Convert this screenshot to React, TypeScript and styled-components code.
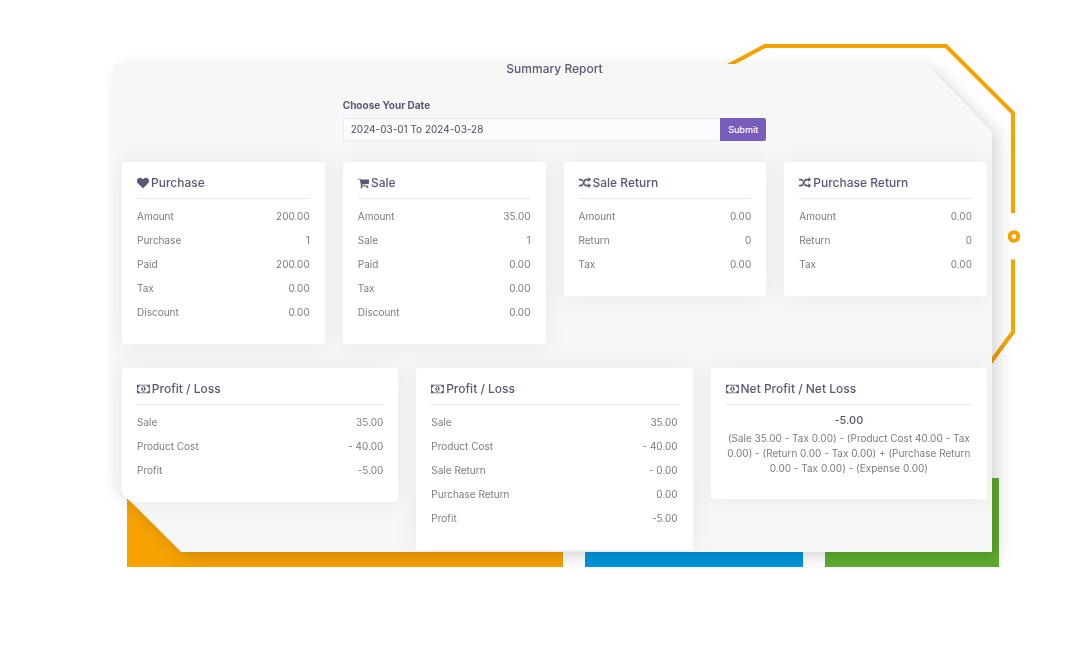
import React from 'react';
import styled, { createGlobalStyle } from 'styled-components';

const GlobalStyle = createGlobalStyle`
  *, *::before, *::after { box-sizing: border-box; }
  body {
    margin: 0;
    background: #fff;
    color: #7c7c7c;
    font-family: Inter, "Liberation Sans", sans-serif;
    font-size: 10px;
    line-height: 15px;
  }
`;

const Page = styled.main`
  padding: 64px 80px 64px 113px;
`;

const Stage = styled.div`
  position: relative;
`;

const Frame = styled.svg`
  position: absolute;
  top: -20px;
  right: -30px;
  width: 302px;
  height: 324px;
  fill: none;
  stroke: #f6a200;
  stroke-width: 4;
`;

const Blocks = styled.div`
  position: absolute;
  left: 14px;
  right: -7px;
  bottom: -15px;
  display: flex;
  align-items: flex-end;
  gap: 22px;
`;

const Block = styled.div<{ $color: string; $share: number; $height: number }>`
  flex: ${(p) => p.$share} 1 0;
  height: ${(p) => p.$height}px;
  background: ${(p) => p.$color};
`;

const PanelShadow = styled.div`
  position: relative;
  filter: drop-shadow(6px 5px 8px rgba(0, 0, 0, 0.16));
`;

const Panel = styled.div`
  padding: 0 5px 2px 9px;
  background: #f7f7f7;
  clip-path: polygon(
    0 0,
    calc(100% - 65px) 0,
    100% 68px,
    100% 100%,
    68px 100%,
    0 calc(100% - 68px)
  );
`;

const PageTitle = styled.h1`
  margin: 0;
  padding-bottom: 25px;
  color: #5b5775;
  font-size: 12px;
  font-weight: 500;
  line-height: 9px;
  text-align: center;
`;

const Grid = styled.div<{ $columns: number }>`
  display: grid;
  grid-template-columns: repeat(${(p) => p.$columns}, minmax(0, 1fr));
  align-items: start;
  column-gap: 18px;
  margin-bottom: 24px;

  &:last-child { margin-bottom: 0; }
`;

const DateForm = styled.form`
  grid-column: 2 / span 2;
`;

const Label = styled.label`
  display: block;
  margin-bottom: 5px;
  color: #5b5775;
  font-weight: 700;
`;

const InputGroup = styled.div`
  display: flex;
  height: 23px;
  margin-bottom: -3px;
`;

const DateInput = styled.input`
  flex: 1;
  min-width: 0;
  padding: 0 7px;
  border: 1px solid #ebe9fb;
  border-right: 0;
  border-radius: 2px 0 0 2px;
  background: #fcfcff;
  color: #495057;
  font: inherit;
`;

const SubmitButton = styled.button`
  padding: 0 8px;
  border: 0;
  border-radius: 0 2px 2px 0;
  background: #785dbd;
  color: #fff;
  font: 500 9px/15px Inter, "Liberation Sans", sans-serif;
`;

const Card = styled.section`
  padding: 0 15px 20px;
  border-radius: 3px;
  background: #fff;
  box-shadow: 0 0 24px rgba(100, 110, 110, 0.1);
`;

const CardTitle = styled.h2`
  display: flex;
  align-items: center;
  gap: 2px;
  margin: 0 0 5px;
  padding: 13px 0 7px;
  border-bottom: 1px solid #e9e9ed;
  color: #5b5775;
  font-size: 12px;
  font-weight: 500;
  line-height: 16px;
`;

const Icon = styled.svg`
  flex: none;
  height: 12px;
  fill: currentColor;
`;

const Table = styled.table`
  width: 100%;
  border-collapse: collapse;
`;

const Name = styled.th`
  height: 24px;
  padding: 0;
  font-weight: 400;
  text-align: left;
`;

const Value = styled.td`
  padding: 0;
  text-align: right;
`;

const NetResult = styled.p`
  margin: 0;
  padding: 3px 0;
  color: #5b5775;
  font-size: 11px;
  font-weight: 500;
  text-align: center;
`;

const Formula = styled.p`
  margin: 0;
  padding-bottom: 3px;
  text-align: center;
`;

const icons = {
  heart: {
    width: 1792,
    d: 'M896 1664q-26 0-44-18l-624-602q-10-8-27.5-26T145 952.5 77 855 23.5 734 0 596q0-220 127-344t351-124q62 0 126.5 21.5t120 58T820 276t76 68q36-36 76-68t95.5-68.5 120-58T1314 128q224 0 351 124t127 344q0 221-229 450l-623 600q-18 18-44 18z',
  },
  cart: {
    width: 1664,
    d: 'M640 1536q0 52-38 90t-90 38-90-38-38-90 38-90 90-38 90 38 38 90zm896 0q0 52-38 90t-90 38-90-38-38-90 38-90 90-38 90 38 38 90zm128-1088v512q0 24-16.5 42.5t-40.5 21.5l-1044 122q13 60 13 70 0 16-24 64h920q26 0 45 19t19 45-19 45-45 19h-1024q-26 0-45-19t-19-45q0-11 8-31.5t16-36 21.5-40 15.5-29.5l-177-823h-204q-26 0-45-19t-19-45 19-45 45-19h256q16 0 28.5 6.5t19.5 15.5 13 24.5 8 26 5.5 29.5 4.5 26h1201q26 0 45 19t19 45z',
  },
  random: {
    width: 1792,
    d: 'M666 481q-60 92-137 273-22-45-37-72.5t-40.5-63.5-51-56.5-63-35-81.5-14.5h-224q-14 0-23-9t-9-23v-192q0-14 9-23t23-9h224q250 0 410 225zm1126 799q0 14-9 23l-320 320q-9 9-23 9-13 0-22.5-9.5t-9.5-22.5v-192q-32 0-85 .5t-81 1-73-1-71-5-64-10.5-63-18.5-58-28.5-59-40-55-53.5-56-69.5q59-93 136-273 22 45 37 72.5t40.5 63.5 51 56.5 63 35 81.5 14.5h256v-192q0-14 9-23t23-9q12 0 24 10l319 319q9 9 9 23zm0-896q0 14-9 23l-320 320q-9 9-23 9-13 0-22.5-9.5t-9.5-22.5v-192h-256q-48 0-87 15t-69 45-51 61.5-45 77.5q-32 62-78 171-29 66-49.5 111t-54 105-64 100-74 83-90 68.5-106.5 42-128 16.5h-224q-14 0-23-9t-9-23v-192q0-14 9-23t23-9h224q48 0 87-15t69-45 51-61.5 45-77.5q32-62 78-171 29-66 49.5-111t54-105 64-100 74-83 90-68.5 106.5-42 128-16.5h256v-192q0-14 9-23t23-9q12 0 24 10l319 319q9 9 9 23z',
  },
  money: {
    width: 1920,
    d: 'M768 1152h384v-96h-128v-448h-114l-148 137 77 80q42-37 55-57h2v288h-128v96zm512-256q0 70-21 142t-59.5 134-101.5 101-138 39-138-39-101.5-101-59.5-134-21-142 21-142 59.5-134 101.5-101 138-39 138 39 101.5 101 59.5 134 21 142zm512 256v-512q-106 0-181-75t-75-181h-1152q0 106-75 181t-181 75v512q106 0 181 75t75 181h1152q0-106 75-181t181-75zm128-832v1152q0 26-19 45t-45 19h-1792q-26 0-45-19t-19-45v-1152q0-26 19-45t45-19h1792q26 0 45 19t19 45z',
  },
};

type IconName = keyof typeof icons;
type Row = [string, string];

interface ReportCardProps {
  icon: IconName;
  title: string;
  rows?: Row[];
  children?: React.ReactNode;
}

function ReportCard({ icon, title, rows, children }: ReportCardProps) {
  const { width, d } = icons[icon];
  return (
    <Card>
      <CardTitle>
        <Icon viewBox={`0 0 ${width} 1792`} aria-hidden="true">
          <path d={d} />
        </Icon>
        {title}
      </CardTitle>
      {rows && (
        <Table>
          <tbody>
            {rows.map(([name, value]) => (
              <tr key={name}>
                <Name scope="row">{name}</Name>
                <Value>{value}</Value>
              </tr>
            ))}
          </tbody>
        </Table>
      )}
      {children}
    </Card>
  );
}

const totals: { icon: IconName; title: string; rows: Row[] }[] = [
  {
    icon: 'heart',
    title: 'Purchase',
    rows: [['Amount', '200.00'], ['Purchase', '1'], ['Paid', '200.00'], ['Tax', '0.00'], ['Discount', '0.00']],
  },
  {
    icon: 'cart',
    title: 'Sale',
    rows: [['Amount', '35.00'], ['Sale', '1'], ['Paid', '0.00'], ['Tax', '0.00'], ['Discount', '0.00']],
  },
  { icon: 'random', title: 'Sale Return', rows: [['Amount', '0.00'], ['Return', '0'], ['Tax', '0.00']] },
  { icon: 'random', title: 'Purchase Return', rows: [['Amount', '0.00'], ['Return', '0'], ['Tax', '0.00']] },
];

export default function App() {
  return (
    <Page>
      <GlobalStyle />
      <Stage>
        <Frame viewBox="0 0 302 324" aria-hidden="true">
          <path d="M-2 27 L45 2 H226 L293 69 V169" />
          <circle cx="294" cy="192.500" r="4.300" />
          <path d="M293 215.500 V288 L268 322" />
        </Frame>
        <Blocks aria-hidden="true">
          <Block $color="#f6a200" $share={5} $height={80} />
          <Block $color="#0097de" $share={2.5} $height={30} />
          <Block $color="#5eae2f" $share={2} $height={89} />
        </Blocks>
        <PanelShadow>
          <Panel>
            <PageTitle>Summary Report</PageTitle>
            <Grid $columns={4}>
              <DateForm onSubmit={(event) => event.preventDefault()}>
                <Label htmlFor="date-range">Choose Your Date</Label>
                <InputGroup>
                  <DateInput id="date-range" type="text" defaultValue="2024-03-01 To 2024-03-28" />
                  <SubmitButton type="submit">Submit</SubmitButton>
                </InputGroup>
              </DateForm>
            </Grid>
            <Grid $columns={4}>
              {totals.map((card) => (
                <ReportCard key={card.title} {...card} />
              ))}
            </Grid>
            <Grid $columns={3}>
              <ReportCard
                icon="money"
                title="Profit / Loss"
                rows={[['Sale', '35.00'], ['Product Cost', '- 40.00'], ['Profit', '-5.00']]}
              />
              <ReportCard
                icon="money"
                title="Profit / Loss"
                rows={[
                  ['Sale', '35.00'],
                  ['Product Cost', '- 40.00'],
                  ['Sale Return', '- 0.00'],
                  ['Purchase Return', '0.00'],
                  ['Profit', '-5.00'],
                ]}
              />
              <ReportCard icon="money" title="Net Profit / Net Loss">
                <NetResult>-5.00</NetResult>
                <Formula>
                  (Sale 35.00 - Tax 0.00) - (Product Cost 40.00 - Tax 0.00) - (Return 0.00 - Tax 0.00) +
                  (Purchase Return 0.00 - Tax 0.00) - (Expense 0.00)
                </Formula>
              </ReportCard>
            </Grid>
          </Panel>
        </PanelShadow>
      </Stage>
    </Page>
  );
}
